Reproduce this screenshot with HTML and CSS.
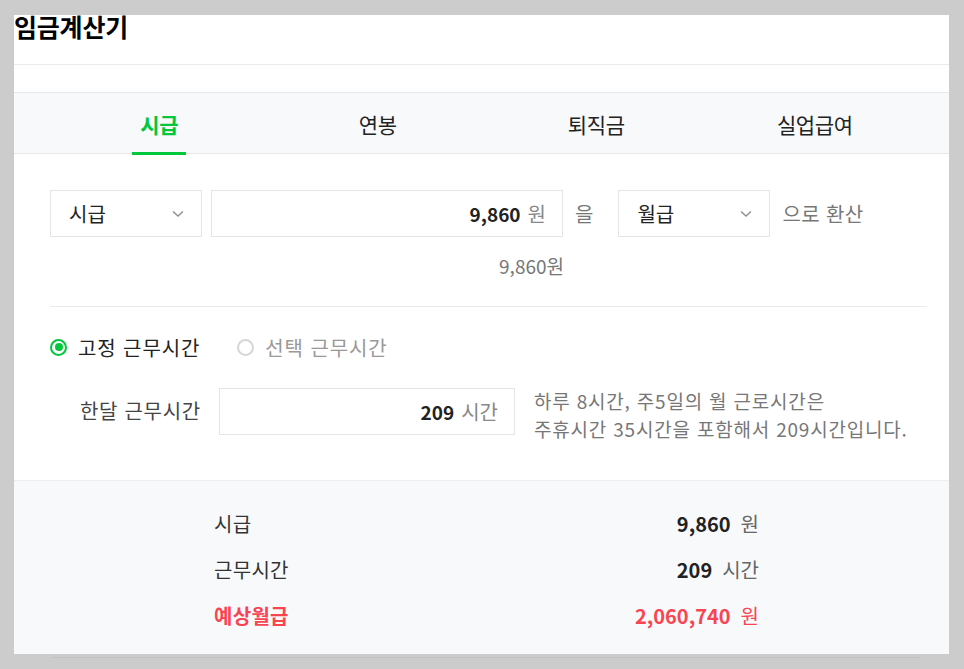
FILE: index.html
```html
<!DOCTYPE html>
<html lang="ko">
<head>
<meta charset="utf-8">
<title>임금계산기</title>
<link rel="stylesheet" href="styles.css">
</head>
<body>
<div class="panel">
  <h1 class="title">임금계산기</h1>
  <div class="gap"></div>
  <nav class="tabs">
    <a class="tab active">시급</a>
    <a class="tab">연봉</a>
    <a class="tab">퇴직금</a>
    <a class="tab">실업급여</a>
  </nav>
  <section class="form">
    <div class="row convert">
      <div class="select sel-from">
        <span>시급</span>
        <svg class="chev" width="12" height="8" viewBox="0 0 12 8"><path d="M1 1.5 L6 6 L11 1.5" fill="none" stroke="#8a8d93" stroke-width="1.4"/></svg>
      </div>
      <div class="input amount">
        <b>9,860</b><span class="unit">원</span>
      </div>
      <span class="particle">을</span>
      <div class="select sel-to">
        <span>월급</span>
        <svg class="chev" width="12" height="8" viewBox="0 0 12 8"><path d="M1 1.5 L6 6 L11 1.5" fill="none" stroke="#8a8d93" stroke-width="1.4"/></svg>
      </div>
      <span class="suffix">으로 환산</span>
    </div>
    <div class="echo">9,860원</div>
    <hr class="divider">
    <div class="radios">
      <label class="radio on"><span class="dot"></span>고정 근무시간</label>
      <label class="radio off"><span class="dot"></span>선택 근무시간</label>
    </div>
    <div class="hours">
      <span class="hours-label">한달 근무시간</span>
      <div class="input hours-input">
        <b>209</b><span class="unit">시간</span>
      </div>
      <p class="help">하루 8시간, 주5일의 월 근로시간은<br>주휴시간 35시간을 포함해서 209시간입니다.</p>
    </div>
  </section>
  <section class="summary">
    <div class="sum-row">
      <span class="sum-label">시급</span>
      <span class="sum-val"><b>9,860</b><span class="unit">원</span></span>
    </div>
    <div class="sum-row">
      <span class="sum-label">근무시간</span>
      <span class="sum-val"><b>209</b><span class="unit">시간</span></span>
    </div>
    <div class="sum-row total">
      <span class="sum-label">예상월급</span>
      <span class="sum-val"><b>2,060,740</b><span class="unit">원</span></span>
    </div>
  </section>
</div>
<div class="shadow-line"></div>
</body>
</html>
```

FILE: styles.css
```css
* { box-sizing: border-box; }
html, body { margin: 0; padding: 0; }
body {
  background: #cccccc;
  font-family: "Noto Sans CJK KR", "Noto Sans", sans-serif;
  color: #222;
  height: 669px;
  overflow: hidden;
}
.panel {
  margin: 15px 0 0 14px;
  width: 935px;
  height: 639px;
  background: #fff;
  display: flex;
  flex-direction: column;
}
.title {
  margin: 0;
  height: 50px;
  font-size: 25px;
  font-weight: 700;
  line-height: 22px;
  letter-spacing: -0.2px;
  color: #000;
  border-bottom: 1px solid #e9ebef;
}
.gap { height: 27px; }
.tabs {
  display: flex;
  height: 62px;
  background: #f8f9fb;
  border-top: 1px solid #e6e8ec;
  border-bottom: 1px solid #e6e8ec;
  padding: 0 25px 0 36px;
}
.tab {
  flex: 1;
  position: relative;
  display: flex;
  align-items: center;
  justify-content: center;
  font-size: 21px;
  color: #222;
  letter-spacing: -0.4px;
  padding-top: 1px;
}
.tab.active {
  color: #00c73c;
  font-weight: 700;
}
.tab.active::after {
  content: "";
  position: absolute;
  bottom: -2px;
  left: 50%;
  width: 54px;
  margin-left: -27px;
  height: 3px;
  background: #00c73c;
}
.form {
  padding: 36px 22px 0 36px;
}
.row { display: flex; align-items: center; }
.convert { height: 47px; }
.select {
  width: 152px;
  height: 47px;
  border: 1px solid #e3e5ea;
  display: flex;
  align-items: center;
  justify-content: space-between;
  padding: 0 17px 0 18px;
  font-size: 20px;
  color: #222;
}
.chev { display: block; }
.input {
  height: 47px;
  border: 1px solid #e3e5ea;
  display: flex;
  align-items: center;
  justify-content: flex-end;
  padding: 0 16px;
  font-size: 19px;
}
.input b { font-weight: 700; color: #222; }
.unit { color: #888; margin-left: 7px; font-size: 20px; }
.amount { width: 352px; margin-left: 9px; }
.particle { margin-left: 12px; font-size: 20px; color: #777; }
.sel-to { margin-left: 25px; }
.suffix { margin-left: 12px; font-size: 20px; color: #777; letter-spacing: 0.4px; }
.echo {
  width: 514px;
  text-align: right;
  margin-top: 16px;
  font-size: 19px;
  color: #777;
  line-height: 26px;
}
.divider {
  margin: 27px 0 0 0;
  border: 0;
  border-top: 1px solid #e9ebef;
}
.radios {
  display: flex;
  align-items: center;
  margin-top: 26px;
  height: 28px;
  font-size: 20px;
}
.radio { display: flex; align-items: center; }
.radio .dot {
  width: 17px;
  height: 17px;
  border-radius: 50%;
  margin-right: 11px;
  position: relative;
}
.radio.on { color: #222; letter-spacing: 0.9px; }
.radio.on .dot { border: 2px solid #00c73c; background: #fff; }
.radio.on .dot::after {
  content: "";
  position: absolute;
  left: 2.5px; top: 2.5px;
  width: 8px; height: 8px;
  border-radius: 50%;
  background: #00c73c;
}
.radio.off { color: #999; margin-left: 37px; letter-spacing: 0.9px; }
.radio.off .dot { border: 2px solid #d6d6d6; background: #fff; }
.hours {
  display: flex;
  align-items: flex-start;
  margin-top: 27px;
}
.hours-label {
  margin-left: 30px;
  width: 139px;
  font-size: 20px;
  line-height: 46px;
  color: #444;
  letter-spacing: 0.7px;
}
.hours-input { width: 296px; }
.help {
  margin: -1px 0 0 19px;
  font-size: 19px;
  line-height: 28px;
  color: #777;
  letter-spacing: 0.8px;
}
.summary {
  margin-top: auto;
  height: 174px;
  background: #f8f9fb;
  border-top: 1px solid #eceef1;
  padding: 19px 0 0 200px;
}
.sum-row {
  width: 545px;
  height: 46px;
  display: flex;
  align-items: center;
  justify-content: space-between;
  font-size: 20px;
}
.sum-label { color: #333; letter-spacing: 0.3px; }
.sum-val b { font-size: 20px; color: #222; }
.sum-val .unit { color: #666; margin-left: 10px; }
.total .sum-label { color: #fa4451; font-weight: 700; }
.total .sum-val b { color: #fa4451; }
.total .sum-val .unit { color: #fa4451; }
.shadow-line {
  margin: 3px 0 0 53px;
  width: 868px;
  height: 1px;
  background: #bfc1c5;
}
```
